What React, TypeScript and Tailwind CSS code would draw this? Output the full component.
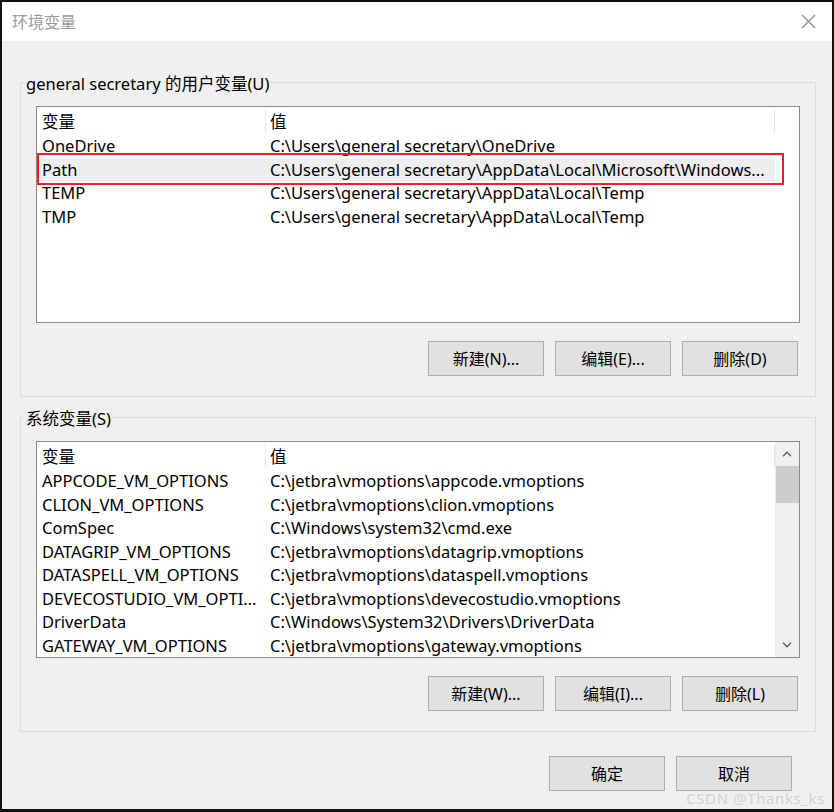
import React from "react";

type Row = [string, string];

const userVars: Row[] = [
  ["OneDrive", "C:\\Users\\general secretary\\OneDrive"],
  ["Path", "C:\\Users\\general secretary\\AppData\\Local\\Microsoft\\Windows..."],
  ["TEMP", "C:\\Users\\general secretary\\AppData\\Local\\Temp"],
  ["TMP", "C:\\Users\\general secretary\\AppData\\Local\\Temp"],
];

const systemVars: Row[] = [
  ["APPCODE_VM_OPTIONS", "C:\\jetbra\\vmoptions\\appcode.vmoptions"],
  ["CLION_VM_OPTIONS", "C:\\jetbra\\vmoptions\\clion.vmoptions"],
  ["ComSpec", "C:\\Windows\\system32\\cmd.exe"],
  ["DATAGRIP_VM_OPTIONS", "C:\\jetbra\\vmoptions\\datagrip.vmoptions"],
  ["DATASPELL_VM_OPTIONS", "C:\\jetbra\\vmoptions\\dataspell.vmoptions"],
  ["DEVECOSTUDIO_VM_OPTI...", "C:\\jetbra\\vmoptions\\devecostudio.vmoptions"],
  ["DriverData", "C:\\Windows\\System32\\Drivers\\DriverData"],
  ["GATEWAY_VM_OPTIONS", "C:\\jetbra\\vmoptions\\gateway.vmoptions"],
];

const font = {
  fontFamily: '"Noto Sans", "Noto Sans CJK SC", sans-serif',
};

const Button = ({ label }: { label: string }) => (
  <button className="w-[116px] h-[35px] bg-[#e1e1e1] border border-[#adadad] text-[16px] text-black flex items-center justify-center">
    {label}
  </button>
);

const VarList = ({
  rows,
  selected,
  scrollbar,
  marked,
}: {
  rows: Row[];
  selected?: number;
  scrollbar?: boolean;
  marked?: boolean;
}) => (
  <div className="relative w-[764px] h-[217px] border border-[#868b94] bg-white flex overflow-hidden text-[16.5px]">
    <div className="flex flex-col">
      <div className="flex h-[27px] pt-[2px] leading-[25px]">
        <div className="w-[229px] pl-[5px] border-r border-[#e5e5e5]">变量</div>
        <div className="w-[509px] pl-[4px] border-r border-[#e5e5e5]">值</div>
      </div>
      {rows.map(([name, value], i) => (
        <div
          key={name}
          className={
            "flex w-[738px] h-[23.5px] leading-[23.5px] whitespace-nowrap " +
            (i === selected ? "bg-[#eeeeee]" : "")
          }
        >
          <div className="w-[229px] pl-[5px] overflow-hidden">{name}</div>
          <div className="w-[509px] pl-[4px] overflow-hidden">{value}</div>
        </div>
      ))}
    </div>
    {scrollbar && (
      <div className="ml-auto w-[24px] bg-[#f0f0f0] flex flex-col items-center">
        <div className="h-[24px] flex items-center justify-center">
          <svg width="10" height="6" viewBox="0 0 10 6" fill="none" stroke="#606060" strokeWidth="1.4">
            <path d="M1 5.2 L5 1.2 L9 5.2" />
          </svg>
        </div>
        <div className="w-[23px] h-[37px] bg-[#cdcdcd]" />
        <div className="mt-auto h-[24px] flex items-center justify-center">
          <svg width="10" height="6" viewBox="0 0 10 6" fill="none" stroke="#606060" strokeWidth="1.4">
            <path d="M1 0.8 L5 4.8 L9 0.8" />
          </svg>
        </div>
      </div>
    )}
    {marked && (
      <div className="absolute left-0 top-[46px] w-[747px] h-[32px] border-2 border-[#e8202a]" />
    )}
  </div>
);

const Group = ({
  title,
  children,
  className,
}: {
  title: string;
  children: React.ReactNode;
  className?: string;
}) => (
  <div className={"ml-[18px] w-[796px] border border-[#dcdcdc] px-[15px] pb-[20px] " + (className ?? "")}>
    <div className="-mt-[10px] -ml-[11px] w-fit px-[1px] bg-[#f0f0f0] leading-[22px] text-[16.5px]">{title}</div>
    {children}
  </div>
);

export default function App() {
  return (
    <div
      style={font}
      className="relative w-[834px] h-[812px] border-x-2 border-t-2 border-b-[3px] border-[#111] bg-[#f0f0f0] text-[16px] text-black flex flex-col overflow-hidden"
    >
      <div className="h-[39px] bg-white flex items-center pl-[10px] pr-[16px] shrink-0">
        <span className="text-[#9a9a9a] text-[16px]">环境变量</span>
        <svg className="ml-auto" width="15" height="15" viewBox="0 0 15 15" stroke="#8a8a8a" strokeWidth="1.2">
          <path d="M1 1 L14 14 M14 1 L1 14" />
        </svg>
      </div>

      <Group title="general secretary 的用户变量(U)" className="mt-[41px]">
        <div className="mt-[11px]">
          <VarList rows={userVars} selected={1} marked />
        </div>
        <div className="mt-[18px] pr-[2px] flex justify-end gap-[11px]">
          <Button label="新建(N)..." />
          <Button label="编辑(E)..." />
          <Button label="删除(D)" />
        </div>
      </Group>

      <Group title="系统变量(S)" className="mt-[20px]">
        <div className="mt-[11px]">
          <VarList rows={systemVars} scrollbar />
        </div>
        <div className="mt-[18px] pr-[2px] flex justify-end gap-[11px]">
          <Button label="新建(W)..." />
          <Button label="编辑(I)..." />
          <Button label="删除(L)" />
        </div>
      </Group>

      <div className="mt-[24px] pr-[40px] flex justify-end gap-[11px]">
        <Button label="确定" />
        <Button label="取消" />
      </div>

      <div className="absolute right-[7px] bottom-[2px] text-[15px] leading-[18px] tracking-[0.6px] text-[#d2d2d2]">
        CSDN @Thanks_ks
      </div>
    </div>
  );
}
